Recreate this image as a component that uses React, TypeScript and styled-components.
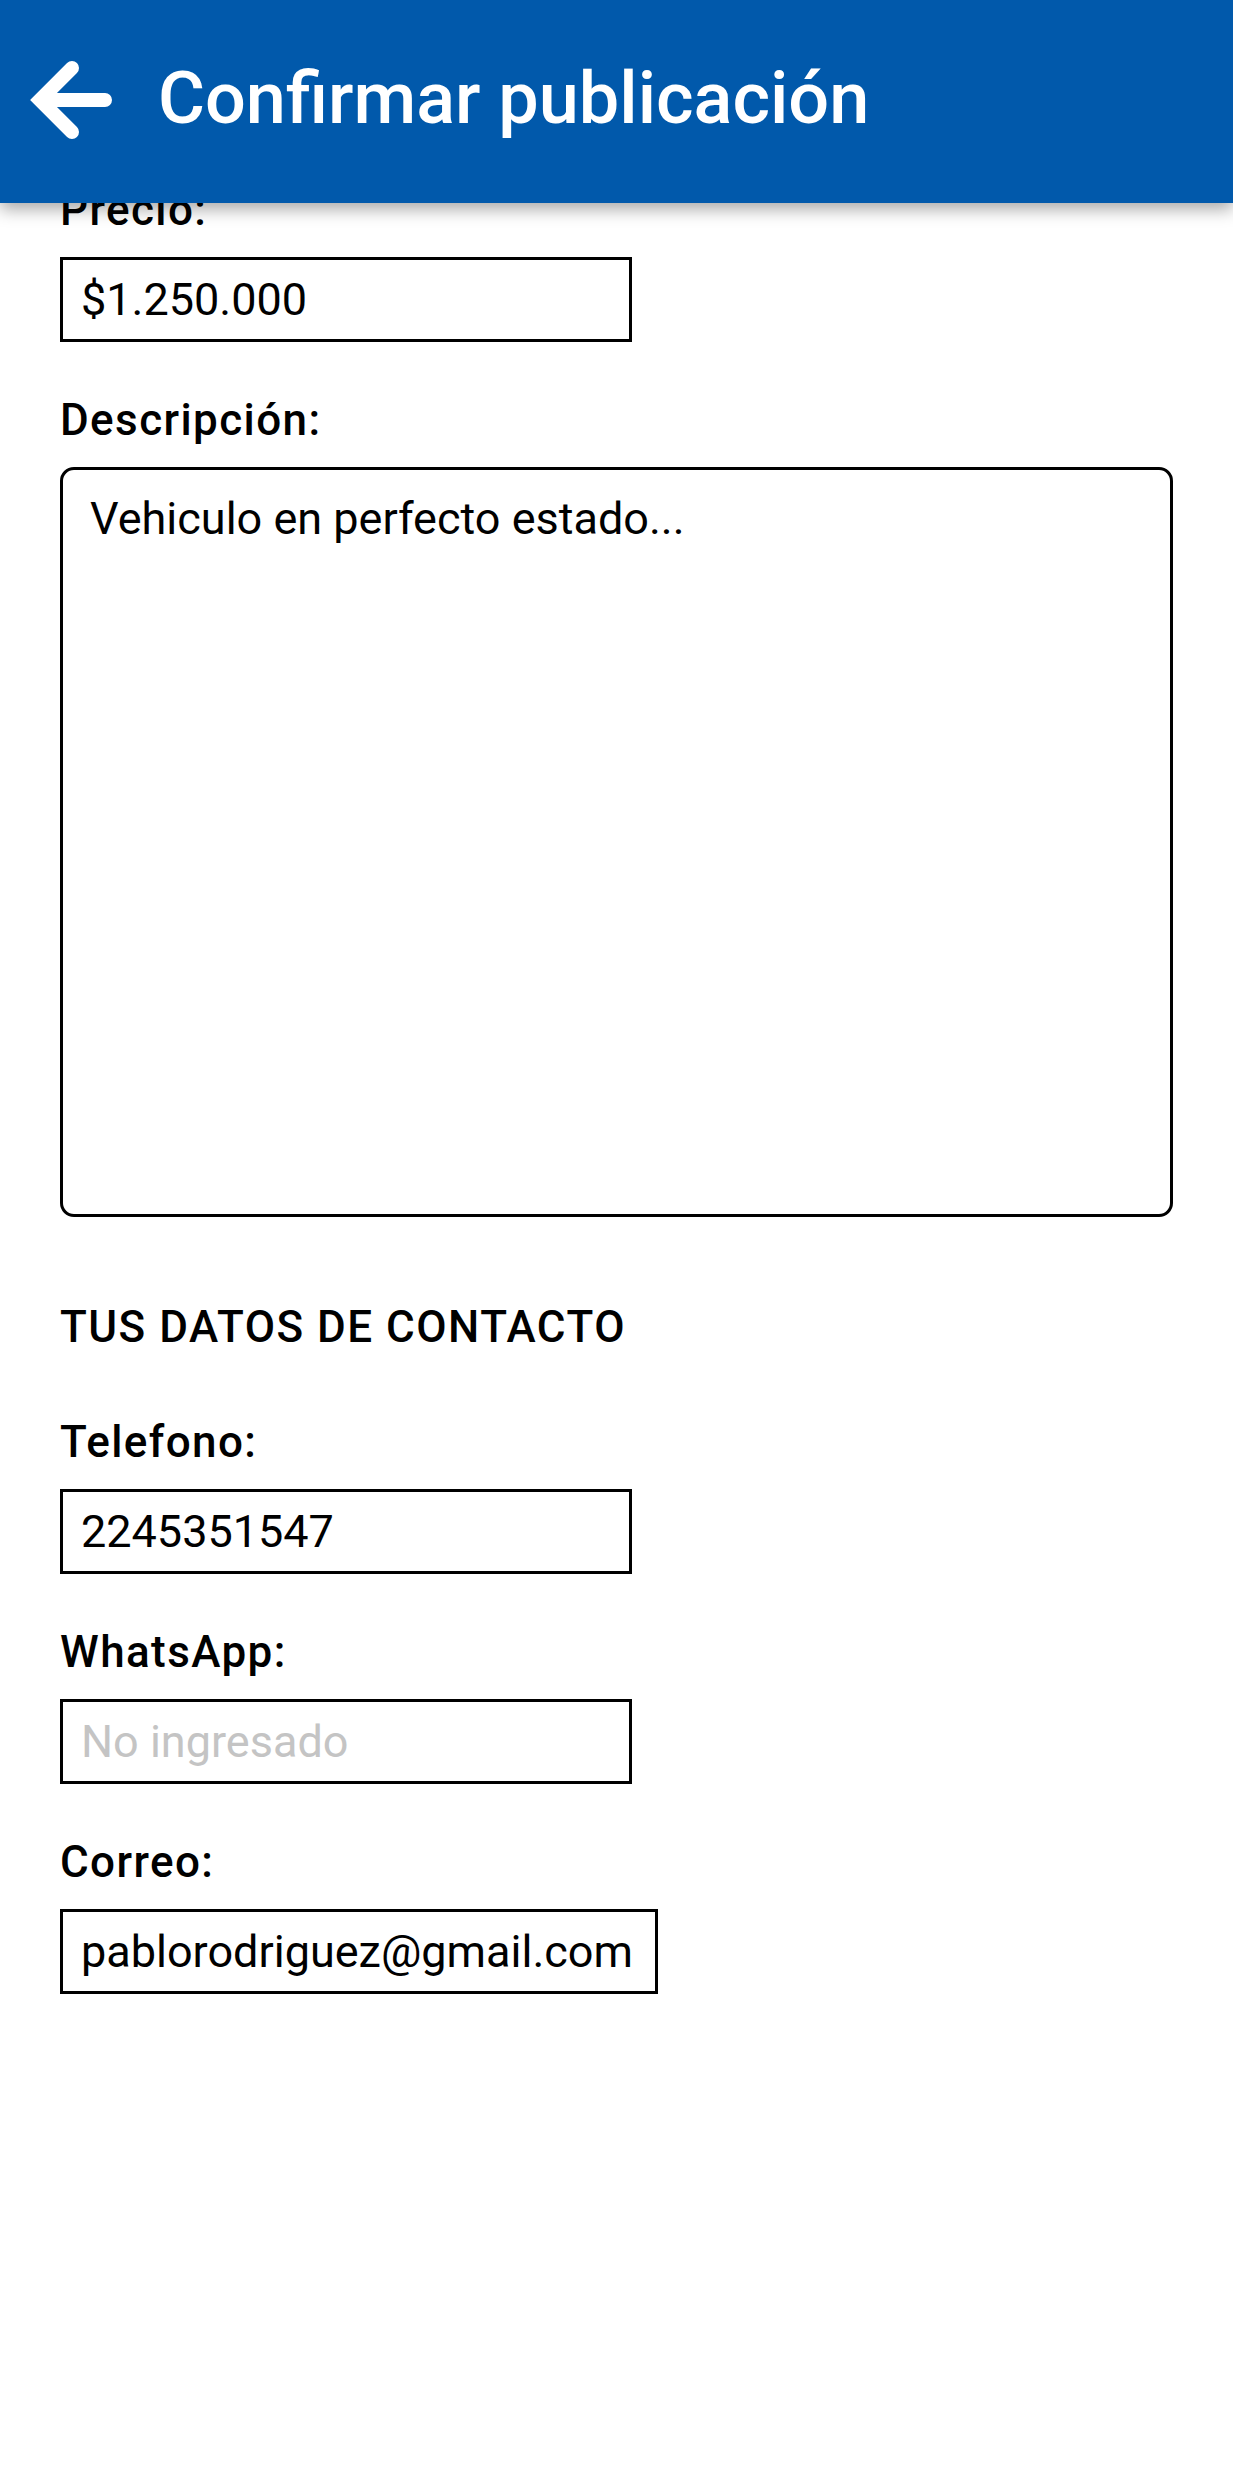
import styled, { createGlobalStyle } from "styled-components";

const GlobalStyle = createGlobalStyle`
  html, body {
    margin: 0;
    padding: 0;
    background: #ffffff;
  }
  body {
    font-family: Roboto, "Noto Sans", "Liberation Sans", sans-serif;
    color: #000;
  }
`;

const Page = styled.div`
  width: 100%;
  min-height: 2469px;
  background: #fff;
`;

const Header = styled.header`
  position: relative;
  z-index: 2;
  height: 203px;
  box-sizing: border-box;
  padding: 0 0 6px 20px;
  display: flex;
  align-items: center;
  background: #0159ab;
  box-shadow: 0 6px 16px rgba(0, 0, 0, 0.35);
`;

const BackIcon = styled.svg`
  width: 100px;
  height: 100px;
  margin-top: 3px;
  flex-shrink: 0;
`;

const Title = styled.h1`
  margin: 0 0 0 38px;
  font-size: 72px;
  line-height: 1;
  font-weight: 500;
  color: #fff;
  white-space: nowrap;
`;

const Content = styled.main`
  position: relative;
  z-index: 1;
  margin-top: -19px;
  padding: 0 60px 200px;
  display: flex;
  flex-direction: column;
`;

const Group = styled.div<{ $space?: number }>`
  display: flex;
  flex-direction: column;
  align-items: flex-start;
  margin-top: ${(p) => p.$space ?? 0}px;
`;

const Label = styled.label`
  font-size: 44px;
  line-height: 52px;
  font-weight: 500;
  letter-spacing: 1.4px;
  margin-bottom: 21px;
`;

const Field = styled.div<{ $empty?: boolean }>`
  display: inline-flex;
  align-items: center;
  box-sizing: border-box;
  min-width: 572px;
  height: 85px;
  padding: 0 22px 0 18px;
  border: 3px solid #000;
  font-size: 45px;
  line-height: 52px;
  white-space: nowrap;
  color: ${(p) => (p.$empty ? "#c4c4c4" : "#000")};
`;

const TextArea = styled.div`
  align-self: stretch;
  box-sizing: border-box;
  height: 750px;
  padding: 23px 27px;
  border: 3px solid #000;
  border-radius: 14px;
  font-size: 45px;
  line-height: 52px;
`;

const SectionTitle = styled.h2`
  margin: 84px 0 0;
  font-size: 44px;
  line-height: 52px;
  font-weight: 500;
  letter-spacing: 1.5px;
`;

const App = () => {
  return (
    <Page>
      <GlobalStyle />
      <Header>
        <BackIcon viewBox="0 0 100 100" fill="none">
          <path
            d="M85 50H20M52 18L20 50L52 82"
            stroke="#fff"
            strokeWidth="14"
            strokeLinecap="round"
            strokeLinejoin="miter"
          />
        </BackIcon>
        <Title>Confirmar publicación</Title>
      </Header>
      <Content>
        <Group>
          <Label>Precio:</Label>
          <Field>$1.250.000</Field>
        </Group>
        <Group $space={52}>
          <Label>Descripción:</Label>
          <TextArea>Vehiculo en perfecto estado...</TextArea>
        </Group>
        <SectionTitle>TUS DATOS DE CONTACTO</SectionTitle>
        <Group $space={63}>
          <Label>Telefono:</Label>
          <Field>2245351547</Field>
        </Group>
        <Group $space={52}>
          <Label>WhatsApp:</Label>
          <Field $empty>No ingresado</Field>
        </Group>
        <Group $space={52}>
          <Label>Correo:</Label>
          <Field>pablorodriguez@gmail.com</Field>
        </Group>
      </Content>
    </Page>
  );
};

export default App;
